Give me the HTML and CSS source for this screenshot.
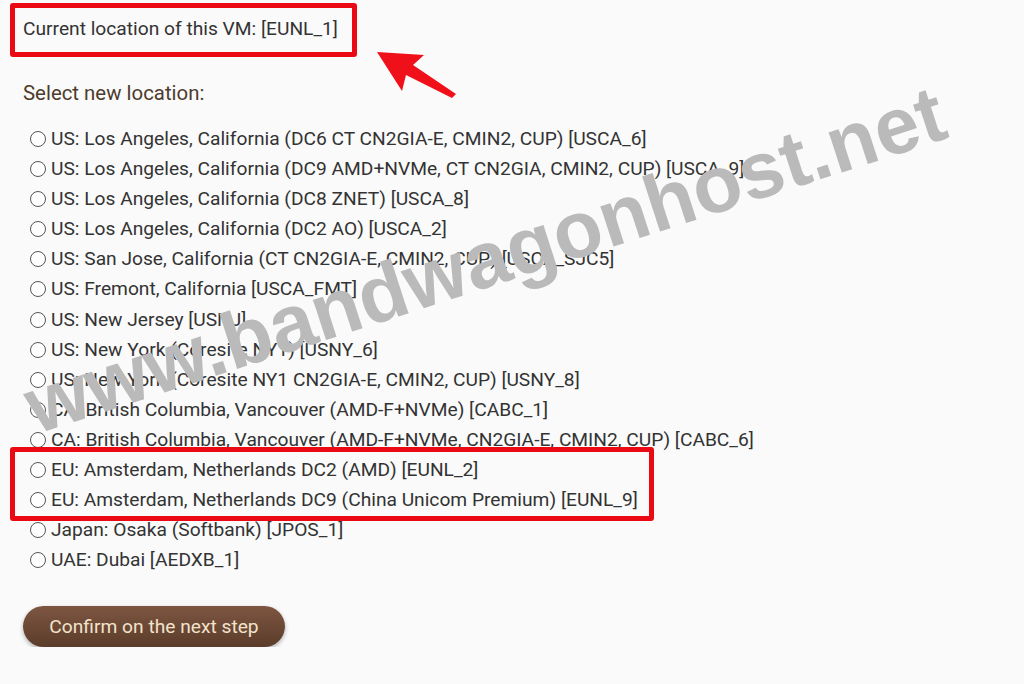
FILE: index.html
```html
<!DOCTYPE html>
<html>
  <head>
    <meta charset="utf-8" />
    <link rel="stylesheet" href="styles.css">
  </head>
  <body>
    <div id="page">
      <p class="current">Current location of this VM: [EUNL_1]</p>
      <p class="select">Select new location:</p>

      <ul class="locations">
        <li><label><input type="radio" name="loc" /> US: Los Angeles, California (DC6 CT CN2GIA-E, CMIN2, CUP) [USCA_6]</label></li>
        <li><label><input type="radio" name="loc" /> US: Los Angeles, California (DC9 AMD+NVMe, CT CN2GIA, CMIN2, CUP) [USCA_9]</label></li>
        <li><label><input type="radio" name="loc" /> US: Los Angeles, California (DC8 ZNET) [USCA_8]</label></li>
        <li><label><input type="radio" name="loc" /> US: Los Angeles, California (DC2 AO) [USCA_2]</label></li>
        <li><label><input type="radio" name="loc" /> US: San Jose, California (CT CN2GIA-E, CMIN2, CUP) [USCA_SJC5]</label></li>
        <li><label><input type="radio" name="loc" /> US: Fremont, California [USCA_FMT]</label></li>
        <li><label><input type="radio" name="loc" /> US: New Jersey [USNJ]</label></li>
        <li><label><input type="radio" name="loc" /> US: New York (Coresite NY1) [USNY_6]</label></li>
        <li><label><input type="radio" name="loc" /> US: New York (Coresite NY1 CN2GIA-E, CMIN2, CUP) [USNY_8]</label></li>
        <li><label><input type="radio" name="loc" /> CA: British Columbia, Vancouver (AMD-F+NVMe) [CABC_1]</label></li>
        <li><label><input type="radio" name="loc" /> CA: British Columbia, Vancouver (AMD-F+NVMe, CN2GIA-E, CMIN2, CUP) [CABC_6]</label></li>
        <li><label><input type="radio" name="loc" /> EU: Amsterdam, Netherlands DC2 (AMD) [EUNL_2]</label></li>
        <li><label><input type="radio" name="loc" /> EU: Amsterdam, Netherlands DC9 (China Unicom Premium) [EUNL_9]</label></li>
        <li><label><input type="radio" name="loc" /> Japan: Osaka (Softbank) [JPOS_1]</label></li>
        <li><label><input type="radio" name="loc" /> UAE: Dubai [AEDXB_1]</label></li>
      </ul>

      <button class="confirm">Confirm on the next step</button>
    </div>

    <!-- annotations -->
    <div class="mark mark-current"></div>
    <div class="mark mark-eu"></div>
    <svg class="arrow" width="100" height="70" viewBox="360 40 100 70">
      <polygon points="377,52 424,55 413,65 456,94 452,98 406,75 402,91" fill="#f0101a" />
    </svg>
    <div class="watermark">www.bandwagonhost.net</div>
  </body>
</html>
```

FILE: styles.css
```css
body {
  margin: 0;
  padding: 0;
  background-color: #fafafa;
  color: #333;
  font-family: Roboto, "Liberation Sans", sans-serif;
  font-size: 19.2px;
}

#page {
  padding: 15px 23px 0;
}

p {
  margin: 0;
}

.current {
  line-height: 27px;
}

.select {
  margin-top: 38px;
  line-height: 27px;
  color: #4f3b2c;
  font-size: 20.4px;
}

.locations {
  list-style: none;
  margin: 17px 0 0;
  padding: 0;
}

.locations li {
  height: 30.1px;
  line-height: 30px;
}

.locations label {
  display: flex;
  align-items: center;
}

.locations input {
  appearance: none;
  width: 16px;
  height: 16px;
  margin: 0 5px 0 7px;
  border: 1px solid #555;
  border-radius: 50%;
  background: #fff;
}

.confirm {
  margin-top: 31px;
  width: 262px;
  height: 41px;
  border: none;
  border-radius: 21px;
  background: linear-gradient(#7d5641, #5b3c2a);
  color: #f2e3cc;
  font-family: inherit;
  font-size: 19.2px;
  box-shadow: 0 2px 4px rgba(0, 0, 0, 0.3);
}

.mark {
  position: absolute;
  border: 5px solid #eb0a14;
  border-radius: 3px;
}

.mark-current {
  left: 10px;
  top: 3px;
  width: 337px;
  height: 44px;
}

.mark-eu {
  left: 10px;
  top: 447px;
  width: 634px;
  height: 64px;
}

.arrow {
  position: absolute;
  left: 360px;
  top: 40px;
}

.watermark {
  position: absolute;
  left: 485px;
  top: 260px;
  transform: translate(-50%, -50%) rotate(-18deg);
  font-family: "Liberation Sans", Arial, sans-serif;
  font-weight: bold;
  font-size: 80px;
  line-height: 1;
  color: #bababa;
  white-space: nowrap;
}
```
